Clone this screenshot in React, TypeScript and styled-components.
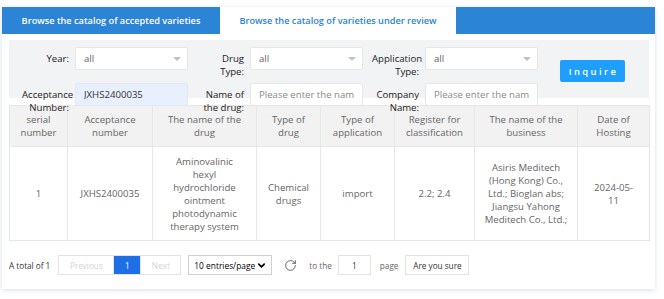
import styled, { createGlobalStyle } from 'styled-components';
import { RotateCw, ChevronDown } from 'lucide-react';

const GlobalStyle = createGlobalStyle`
  body {
    margin: 0;
    background: #fff;
    font-family: 'Open Sans', 'Noto Sans', sans-serif;
  }
`;

const Page = styled.div`
  width: 664px;
  height: 299px;
  box-sizing: border-box;
  padding: 7px 9px 0 2px;
`;

const Panel = styled.div`
  width: 653px;
  height: 282px;
  background: #fff;
  box-shadow: 0 1px 5px rgba(120, 150, 200, 0.3);
`;

const TabBar = styled.div`
  display: flex;
  height: 27px;
  background: #2b84d5;
`;

const Tab = styled.div<{ $active?: boolean; $width: number }>`
  width: ${({ $width }) => $width}px;
  display: flex;
  align-items: center;
  justify-content: center;
  font-size: 9.2px;
  font-weight: 600;
  white-space: nowrap;
  color: ${({ $active }) => ($active ? '#2b84d5' : '#fff')};
  background: ${({ $active }) => ($active ? '#fff' : 'transparent')};
`;

const Body = styled.div`
  padding: 6px 6px 0 7px;
`;

const Filter = styled.div`
  height: 58px;
  box-sizing: border-box;
  padding: 7px 0 0 13px;
  background: #f2f3f5;
  display: grid;
  grid-template-columns: repeat(3, 167px) auto;
  grid-template-rows: 23px 23px;
  column-gap: 8px;
  row-gap: 13px;
`;

const Field = styled.div`
  display: flex;
  gap: 6px;
`;

const Label = styled.label`
  width: 47px;
  flex-shrink: 0;
  padding-top: 5px;
  text-align: right;
  font-size: 9.6px;
  line-height: 13px;
  color: #222;
`;

const SelectBox = styled.div`
  position: relative;
  width: 113px;
  height: 23px;
  box-sizing: border-box;
  padding: 0 8px;
  display: flex;
  align-items: center;
  border: 1px solid #e6e6e6;
  border-radius: 2px;
  background: #fff;
  font-size: 9.6px;
  color: #666;

  &::after {
    content: '';
    position: absolute;
    right: 6px;
    top: 9px;
    border-left: 4px solid transparent;
    border-right: 4px solid transparent;
    border-top: 4px solid #c2c2c2;
  }
`;

const TextInput = styled.input<{ $filled?: boolean }>`
  width: 113px;
  height: 23px;
  box-sizing: border-box;
  padding: 0 8px;
  border: 1px solid ${({ $filled }) => ($filled ? '#e2e8f2' : '#e6e6e6')};
  border-radius: 2px;
  outline: none;
  background: ${({ $filled }) => ($filled ? '#e8f0fe' : '#fff')};
  font-family: inherit;
  font-size: 9.6px;
  color: #333;

  &::placeholder {
    color: #8a8a8a;
  }
`;

const InquireButton = styled.button`
  grid-column: 4;
  grid-row: 1 / span 2;
  align-self: start;
  margin: 13px 0 0 13px;
  width: 65px;
  height: 22px;
  border: none;
  border-radius: 2px;
  background: #1e9fff;
  color: #fff;
  font-family: inherit;
  font-size: 9.4px;
  font-weight: 600;
  letter-spacing: 2.4px;
  padding: 0 0 0 2px;
`;

const Table = styled.table`
  margin-top: 7px;
  width: 640px;
  table-layout: fixed;
  border-collapse: collapse;
  font-size: 9.6px;
  line-height: 13px;
  color: #666;
  text-align: center;
`;

const Th = styled.th`
  height: 40px;
  padding: 0 10px;
  background: #f2f2f2;
  border: 1px solid #e6e6e6;
  font-weight: 400;
`;

const Td = styled.td`
  height: 93px;
  padding: 0 4px;
  border: 1px solid #e6e6e6;
  white-space: nowrap;
`;

const Pager = styled.div`
  display: flex;
  align-items: center;
  margin-top: 14px;
  height: 20px;
  font-size: 8.2px;
  color: #333;
`;

const Total = styled.span`
  margin-right: 8px;
`;

const PageGroup = styled.div`
  display: flex;
  height: 20px;
  box-sizing: border-box;
  border: 1px solid #e2e2e2;
`;

const PageButton = styled.span<{ $width: number; $active?: boolean; $disabled?: boolean }>`
  width: ${({ $width }) => $width}px;
  display: flex;
  align-items: center;
  justify-content: center;
  background: ${({ $active }) => ($active ? '#1e6fe6' : '#fff')};
  color: ${({ $active, $disabled }) => ($active ? '#fff' : $disabled ? '#d2d2d2' : '#333')};
  & + & {
    border-left: 1px solid #e2e2e2;
  }
`;

const SizeSelect = styled.div`
  margin-left: 7px;
  width: 84px;
  height: 20px;
  box-sizing: border-box;
  padding: 0 4px 0 5px;
  display: flex;
  align-items: center;
  justify-content: space-between;
  border: 1px solid #d0d0d0;
  font-size: 8.4px;
  white-space: nowrap;
  color: #000;
`;

const Refresh = styled(RotateCw)`
  margin-left: 12px;
  color: #555;
`;

const PagerText = styled.span<{ $gap: number }>`
  margin-left: ${({ $gap }) => $gap}px;
  color: #666;
`;

const JumpInput = styled.input`
  margin-left: 6px;
  width: 33px;
  height: 20px;
  box-sizing: border-box;
  border: 1px solid #e2e2e2;
  outline: none;
  text-align: center;
  font-family: inherit;
  font-size: 8.2px;
  color: #333;
`;

const ConfirmButton = styled.button`
  margin-left: 7px;
  width: 64px;
  height: 20px;
  padding: 0;
  border: 1px solid #e2e2e2;
  background: #fff;
  font-family: inherit;
  font-size: 8.2px;
  color: #333;
`;

const columns = [58, 85, 104, 64, 74, 80, 103, 72];

const headers = [
  'serial number',
  'Acceptance number',
  'The name of the drug',
  'Type of drug',
  'Type of application',
  'Register for classification',
  'The name of the business',
  'Date of Hosting',
];

// body cells, one entry per printed line
const row: string[][] = [
  ['1'],
  ['JXHS2400035'],
  ['Aminovalinic', 'hexyl', 'hydrochloride', 'ointment', 'photodynamic', 'therapy system'],
  ['Chemical', 'drugs'],
  ['import'],
  ['2.2; 2.4'],
  ['Asiris Meditech', '(Hong Kong) Co.,', 'Ltd.; Bioglan abs;', 'Jiangsu Yahong', 'Meditech Co., Ltd.;'],
  ['2024-05-', '11'],
];

const App = () => {
  return (
    <>
      <GlobalStyle />
      <Page>
        <Panel>
          <TabBar>
            <Tab $width={218}>Browse the catalog of accepted varieties</Tab>
            <Tab $width={236} $active>
              Browse the catalog of varieties under review
            </Tab>
          </TabBar>

          <Body>
            <Filter>
              <Field>
                <Label>Year:</Label>
                <SelectBox>all</SelectBox>
              </Field>
              <Field>
                <Label>Drug Type:</Label>
                <SelectBox>all</SelectBox>
              </Field>
              <Field>
                <Label>Application Type:</Label>
                <SelectBox>all</SelectBox>
              </Field>
              <InquireButton>Inquire</InquireButton>
              <Field>
                <Label>Acceptance Number:</Label>
                <TextInput $filled defaultValue="JXHS2400035" />
              </Field>
              <Field>
                <Label>Name of the drug:</Label>
                <TextInput placeholder="Please enter the name of the drug" />
              </Field>
              <Field>
                <Label>Company Name:</Label>
                <TextInput placeholder="Please enter the name of the company" />
              </Field>
            </Filter>

            <Table>
              <colgroup>
                {columns.map((w, i) => (
                  <col key={i} style={{ width: w }} />
                ))}
              </colgroup>
              <thead>
                <tr>
                  {headers.map((h) => (
                    <Th key={h}>{h}</Th>
                  ))}
                </tr>
              </thead>
              <tbody>
                <tr>
                  {row.map((lines, i) => (
                    <Td key={i}>
                      {lines.map((l, j) => (
                        <span key={j}>
                          {j > 0 && <br />}
                          {l}
                        </span>
                      ))}
                    </Td>
                  ))}
                </tr>
              </tbody>
            </Table>

            <Pager>
              <Total>A total of 1</Total>
              <PageGroup>
                <PageButton $width={54} $disabled>
                  Previous
                </PageButton>
                <PageButton $width={26} $active>
                  1
                </PageButton>
                <PageButton $width={39} $disabled>
                  Next
                </PageButton>
              </PageGroup>
              <SizeSelect>
                10 entries/page
                <ChevronDown size={11} strokeWidth={3.5} />
              </SizeSelect>
              <Refresh size={13} strokeWidth={1.6} />
              <PagerText $gap={12}>to the</PagerText>
              <JumpInput defaultValue="1" />
              <PagerText $gap={9}>page</PagerText>
              <ConfirmButton>Are you sure</ConfirmButton>
            </Pager>
          </Body>
        </Panel>
      </Page>
    </>
  );
};

export default App;
